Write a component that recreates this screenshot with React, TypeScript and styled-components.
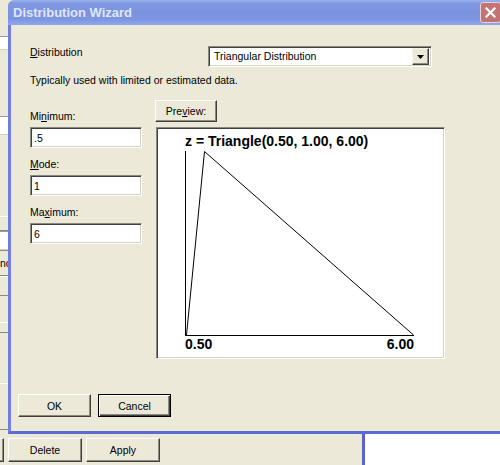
import styled, { createGlobalStyle, css } from 'styled-components';

const GlobalStyle = createGlobalStyle`
  html, body {
    margin: 0;
    padding: 0;
  }
  body {
    background: #ece9d8;
    font-family: "Liberation Sans", Arial, sans-serif;
  }
`;

type SegmentKind = 'bg' | 'field' | 'button' | 'text';

const backdropSegments: { h: number; kind: SegmentKind; text?: string }[] = [
  { h: 36, kind: 'bg' },
  { h: 14, kind: 'field' },
  { h: 66, kind: 'bg' },
  { h: 19, kind: 'field' },
  { h: 81, kind: 'bg' },
  { h: 15, kind: 'button' },
  { h: 19, kind: 'field' },
  { h: 26, kind: 'text', text: 'nc' },
  { h: 20, kind: 'button' },
  { h: 26, kind: 'bg' },
  { h: 11, kind: 'button' },
  { h: 50, kind: 'bg' },
  { h: 47, kind: 'button' },
  { h: 4, kind: 'bg' },
];

const Mnemonic = ({ text, at }: { text: string; at: number }) => (
  <>
    {text.slice(0, at)}
    <U>{text[at]}</U>
    {text.slice(at + 1)}
  </>
);

const App = () => {
  return (
    <>
      <GlobalStyle />
      <Screen>
        <BackdropStrip>
          {backdropSegments.map((s, i) => (
            <Segment key={i} $h={s.h} $kind={s.kind}>
              {s.text}
            </Segment>
          ))}
        </BackdropStrip>

        <Dialog>
          <TitleBar>
            <TitleText>Distribution Wizard</TitleText>
            <CloseButton>
              <svg width="11" height="11" viewBox="0 0 11 11">
                <path
                  d="M1.5 1.5 L9.5 9.5 M9.5 1.5 L1.5 9.5"
                  stroke="#fff"
                  strokeWidth="2.2"
                  strokeLinecap="square"
                />
              </svg>
            </CloseButton>
          </TitleBar>

          <Body>
            <TopRow>
              <Label $width={178}>
                <Mnemonic text="Distribution" at={0} />
              </Label>
              <Select>
                <SelectText>Triangular Distribution</SelectText>
                <DropButton>
                  <svg width="7" height="4" viewBox="0 0 7 4">
                    <path d="M0 0 H7 L3.5 4 Z" fill="#000" />
                  </svg>
                </DropButton>
              </Select>
            </TopRow>

            <Description>
              Typically used with limited or estimated data.
            </Description>

            <Main>
              <FieldColumn>
                <FieldGroup>
                  <Label>
                    <Mnemonic text="Minimum:" at={2} />
                  </Label>
                  <TextInput>.5</TextInput>
                </FieldGroup>
                <FieldGroup>
                  <Label>
                    <Mnemonic text="Mode:" at={0} />
                  </Label>
                  <TextInput>1</TextInput>
                </FieldGroup>
                <FieldGroup>
                  <Label>
                    <Mnemonic text="Maximum:" at={2} />
                  </Label>
                  <TextInput>6</TextInput>
                </FieldGroup>
              </FieldColumn>

              <PreviewColumn>
                <Button $w={62} $h={22}>
                  <Mnemonic text="Preview:" at={3} />
                </Button>
                <ChartBox>
                  <ChartTitle>z = Triangle(0.50, 1.00, 6.00)</ChartTitle>
                  <Plot width="230" height="188" viewBox="0 0 230 188">
                    <g stroke="#000" strokeWidth="1" shapeRendering="crispEdges">
                      <line x1="0.5" y1="2" x2="0.5" y2="186.5" />
                      <line x1="0" y1="186.5" x2="229" y2="186.5" />
                    </g>
                    <polyline
                      points="1.5,186 19.5,2.5 228.5,186"
                      fill="none"
                      stroke="#000"
                      strokeWidth="1"
                    />
                  </Plot>
                  <AxisLabels>
                    <span>0.50</span>
                    <span>6.00</span>
                  </AxisLabels>
                </ChartBox>
              </PreviewColumn>
            </Main>

            <Actions>
              <Button $w={73} $h={23}>OK</Button>
              <Button $w={73} $h={23} $default>
                Cancel
              </Button>
            </Actions>
          </Body>
        </Dialog>

        <BottomRow>
          <BottomButtons>
            <Button $w={74} $h={24} $offset={-70} />
            <Button $w={74} $h={24}>Delete</Button>
            <Button $w={74} $h={24}>Apply</Button>
          </BottomButtons>
          <WhitePanel />
        </BottomRow>
      </Screen>
    </>
  );
};

const Screen = styled.div`
  width: 500px;
  height: 465px;
  overflow: hidden;
  display: grid;
  grid-template-columns: 8px 492px;
  grid-template-rows: 434px 31px;
  background: #ece9d8;
`;

const BackdropStrip = styled.div`
  display: flex;
  flex-direction: column;
  overflow: hidden;
`;

const Segment = styled.div<{ $h: number; $kind: SegmentKind }>`
  box-sizing: border-box;
  height: ${(p) => p.$h}px;
  background: #ece9d8;
  ${(p) =>
    p.$kind === 'field' &&
    css`
      background: #fff;
      border-top: 1px solid #9c9a90;
      border-bottom: 1px solid #d6d2c2;
    `}
  ${(p) =>
    p.$kind === 'button' &&
    css`
      border-top: 1px solid #fff;
      border-bottom: 1px solid #8a887e;
    `}
  ${(p) =>
    p.$kind === 'text' &&
    css`
      display: flex;
      justify-content: flex-end;
      align-items: center;
      border-top: 1px solid #8a887e;
      border-bottom: 1px solid #8a887e;
      font-size: 10.5px;
      color: #000;
      white-space: nowrap;
      margin-right: -3px;
    `}
`;

const Dialog = styled.div`
  display: flex;
  flex-direction: column;
  min-width: 0;
`;

const TitleBar = styled.div`
  height: 25px;
  display: flex;
  align-items: center;
  justify-content: space-between;
  padding-left: 5px;
  background: linear-gradient(
    #9cb2ee 0px,
    #8199e2 3px,
    #7b92df 12px,
    #7d95e1 19px,
    #8ea7eb 25px
  );
  border-radius: 6px 0 0 0;
`;

const TitleText = styled.span`
  font-family: "Liberation Sans", Arial, sans-serif;
  font-weight: bold;
  font-size: 13px;
  color: #dfe7f8;
  white-space: nowrap;
`;

const CloseButton = styled.div`
  box-sizing: border-box;
  width: 21px;
  height: 21px;
  margin-right: -1px;
  display: flex;
  align-items: center;
  justify-content: center;
  background: #c27472;
  border: 1px solid #e6d4dc;
  border-radius: 3px;
`;

const Body = styled.div`
  flex: 1;
  display: flex;
  flex-direction: column;
  padding: 21px 0 0 19px;
  border-left: 3px solid #6f80d9;
  border-bottom: 3px solid #5a6bd4;
  background: #ece9d8;
  font-size: 10.5px;
  color: #000;
`;

const TopRow = styled.div`
  display: flex;
  align-items: flex-start;
`;

const Label = styled.div<{ $width?: number }>`
  line-height: 13px;
  white-space: nowrap;
  ${(p) => p.$width && `width: ${p.$width}px;`}
`;

const U = styled.span`
  text-decoration: underline;
`;

const sunken = css`
  box-sizing: border-box;
  background: #fff;
  border: 1px solid;
  border-color: #8c8a80 #fff #fff #8c8a80;
  box-shadow: inset 1px 1px #404040, inset -1px -1px #d8d4c6;
`;

const Select = styled.div`
  ${sunken};
  width: 224px;
  height: 21px;
  display: flex;
  align-items: center;
  justify-content: space-between;
  padding: 2px 2px 2px 2px;
`;

const SelectText = styled.span`
  padding-left: 3px;
  line-height: 13px;
`;

const DropButton = styled.div`
  box-sizing: border-box;
  width: 17px;
  height: 17px;
  display: flex;
  align-items: center;
  justify-content: center;
  background: #ece9d8;
  border: 1px solid;
  border-color: #f4f2ea #404040 #404040 #f4f2ea;
  box-shadow: inset -1px -1px #8c8a80;
`;

const Description = styled.div`
  margin-top: 7px;
  line-height: 13px;
`;

const Main = styled.div`
  display: flex;
  gap: 13px;
  margin-top: 13px;
`;

const FieldColumn = styled.div`
  width: 112px;
  padding-top: 10px;
  display: flex;
  flex-direction: column;
  gap: 10px;
`;

const FieldGroup = styled.div`
  display: flex;
  flex-direction: column;
  gap: 4px;
`;

const TextInput = styled.div`
  ${sunken};
  height: 21px;
  display: flex;
  align-items: center;
  padding-left: 3px;
`;

const PreviewColumn = styled.div`
  display: flex;
  flex-direction: column;
  align-items: flex-start;
  gap: 5px;
`;

const Button = styled.button<{
  $w: number;
  $h: number;
  $default?: boolean;
  $offset?: number;
}>`
  box-sizing: border-box;
  width: ${(p) => p.$w}px;
  height: ${(p) => p.$h}px;
  flex-shrink: 0;
  padding: 0;
  margin: 0;
  margin-left: ${(p) => p.$offset ?? 0}px;
  background: #ece9d8;
  font-family: "Liberation Sans", Arial, sans-serif;
  font-size: 10.5px;
  color: #000;
  border: 1px solid;
  border-color: #fff #404040 #404040 #fff;
  box-shadow: inset -1px -1px #8c8a80;
  ${(p) =>
    p.$default &&
    css`
      border: 1px solid #000;
      box-shadow: inset 1px 1px #fff, inset -1px -1px #404040,
        inset -2px -2px #8c8a80;
    `}
`;

const ChartBox = styled.div`
  ${sunken};
  width: 289px;
  height: 232px;
  margin-left: 1px;
  padding: 6px 0 0 28px;
  display: flex;
  flex-direction: column;
  align-items: flex-start;
`;

const ChartTitle = styled.div`
  font-weight: bold;
  font-size: 14px;
  line-height: 15px;
  white-space: nowrap;
`;

const Plot = styled.svg`
  display: block;
`;

const AxisLabels = styled.div`
  width: 229px;
  display: flex;
  justify-content: space-between;
  font-weight: bold;
  font-size: 14px;
  line-height: 14px;
`;

const Actions = styled.div`
  display: flex;
  gap: 7px;
  margin: 35px 0 0 -12px;
`;

const BottomRow = styled.div`
  grid-column: 1 / -1;
  display: flex;
`;

const BottomButtons = styled.div`
  width: 362px;
  display: flex;
  gap: 4px;
  padding-top: 4px;
  overflow: hidden;
`;

const WhitePanel = styled.div`
  flex: 1;
  background: #fff;
  border-left: 3px solid #5565d6;
`;

export default App;
